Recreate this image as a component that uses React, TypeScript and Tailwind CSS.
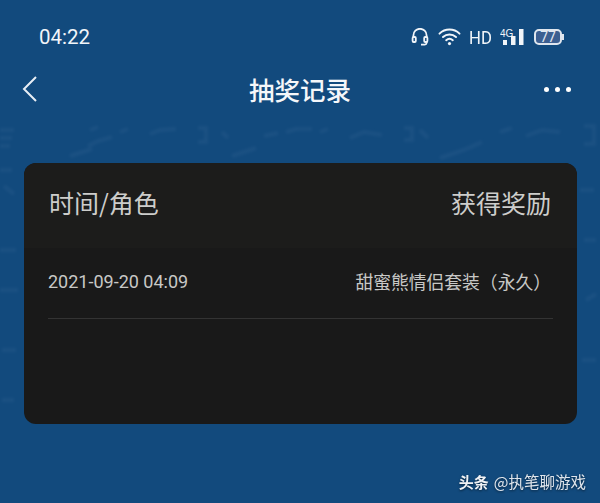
const cjk = "font-['Noto_Sans_CJK_SC','Noto_Sans',sans-serif]";

// faint scribbles in the page background, behind the card
const streaks = [
  "M0 130h14M0 138h12M0 146h10M88 146l10-5 14-4M70 156l22-7M90 130l8-3M120 132l8-3M150 134l10-4 16-1M198 128h8v14h-8M222 132l6 6M232 156l24-8M264 136l14-3M286 132l10-3 16 0",
  "M320 132l8-3M350 138l14-6 18 3M404 128h8v12h-8M420 130l8 8M440 158l24-8 18-8M500 132l12-4M526 136l16-6 18 2M584 126h10v18h-10",
  "M0 170h12M4 186l10 8M0 250h16M0 290h18M580 190h14M584 240h12M586 300l10-6M582 360h14M2 350h14M2 400h12",
];

function HeadsetIcon() {
  return (
    <svg width="18" height="18" viewBox="0 0 18 18" fill="none" stroke="#f1f5f9" strokeWidth="1.8">
      <path d="M2.4 10V7.4a6.6 6.6 0 0 1 13.2 0V10" />
      <rect x="1.6" y="9" width="3.2" height="5" rx="1" />
      <rect x="13.2" y="9" width="3.2" height="5" rx="1" />
      <path d="M15.6 14v1a1.8 1.8 0 0 1-1.8 1.6H10" />
    </svg>
  );
}

function WifiIcon() {
  return (
    <svg width="23" height="18" viewBox="0 0 23 18" fill="none" stroke="#f1f5f9" strokeWidth="2" strokeLinecap="round">
      <path d="M1.5 5.6a14.5 14.5 0 0 1 20 0" />
      <path d="M5 9a9.6 9.6 0 0 1 13 0" />
      <path d="M8.2 12.2a5 5 0 0 1 6.6 0" />
      <circle cx="11.5" cy="15.6" r="1.6" fill="#f1f5f9" stroke="none" />
    </svg>
  );
}

function SignalIcon() {
  return (
    <svg width="25" height="18" viewBox="0 0 25 18" fill="#f1f5f9">
      <rect x="3" y="12" width="4" height="5" />
      <rect x="11" y="8" width="4.5" height="9" />
      <rect x="19" y="1" width="4.5" height="16" />
      <text x="0" y="8.5" fontSize="10" fontFamily="Liberation Sans, sans-serif">4G</text>
    </svg>
  );
}

function Battery() {
  return (
    <div className="flex items-center">
      <div className="w-[28px] h-[16px] rounded-[5px] border-2 border-[#dfe6ee] bg-[#3c5f91] flex items-center justify-center text-[14px] leading-none text-[#e2e8f0] font-['Roboto',sans-serif]">
        77
      </div>
      <div className="w-[2px] h-[6px] bg-[#dfe6ee]" />
    </div>
  );
}

export default function App() {
  return (
    <div className="relative w-[600px] h-[503px] overflow-hidden bg-[#124a7d] flex flex-col">
      <svg className="absolute inset-0 blur-[1.5px]" width="600" height="503" fill="none" stroke="#2a5c8c" strokeWidth="4" opacity="0.4">
        {streaks.map((d) => (
          <path key={d} d={d} />
        ))}
      </svg>

      {/* status bar */}
      <div className="relative h-[74px] shrink-0 flex items-center justify-between pl-[39px] pr-[36px]">
        <span className="text-[20.5px] text-[#f1f5f9] font-['Roboto',sans-serif]">04:22</span>
        <div className="flex items-center gap-[9px]">
          <HeadsetIcon />
          <WifiIcon />
          <span className="w-[21px] flex justify-center text-[19px] leading-none text-[#f1f5f9] font-['Roboto',sans-serif] scale-x-[0.88]">HD</span>
          <SignalIcon />
          <Battery />
        </div>
      </div>

      {/* nav bar */}
      <div className="relative h-[30px] shrink-0 flex items-center justify-between pl-[22px] pr-[29px]">
        <svg width="16" height="28" viewBox="0 0 16 28" fill="none" stroke="#e8eef5" strokeWidth="2">
          <path d="M14 2 2 14l12 12" />
        </svg>
        <h1 className={`${cjk} absolute left-0 right-0 text-center text-[25.5px] font-medium leading-none text-[#f5f7fa]`}>
          抽奖记录
        </h1>
        <div className="flex items-center gap-[6px]">
          <span className="size-[5px] rounded-full bg-white" />
          <span className="size-[5px] rounded-full bg-white" />
          <span className="size-[5px] rounded-full bg-white" />
        </div>
      </div>

      {/* record card */}
      <div className="relative mt-[59px] ml-[24px] w-[553px] h-[261px] rounded-[12px] bg-[#191919] flex flex-col">
        <div className="h-[85px] shrink-0 rounded-t-[12px] bg-[#1c1c1b] flex items-center justify-between pl-[25px] pr-[26px] pb-[6px]">
          <span className={`${cjk} text-[25px] leading-none text-[#cdcdcb]`}>时间/角色</span>
          <span className={`${cjk} text-[25px] leading-none text-[#cdcdcb]`}>获得奖励</span>
        </div>
        <div className="mx-[24px] h-[71px] flex items-center justify-between border-b border-[#333333] pb-[2px]">
          <span className="text-[18px] leading-none text-[#c8c8c6] font-['Roboto',sans-serif]">2021-09-20 04:09</span>
          <span className={`${cjk} text-[17.8px] leading-none text-[#c8c8c6] pr-[2px]`}>甜蜜熊情侣套装（永久）</span>
        </div>
      </div>

      {/* watermark */}
      <div className="absolute right-[14px] bottom-[14px] flex items-center gap-[5px] text-[#f0f2f5] drop-shadow-[0_1px_1px_rgba(0,0,0,0.5)]">
        <span className={`${cjk} text-[15px] font-bold leading-none`}>头条</span>
        <span className={`${cjk} text-[15.5px] leading-none text-[#dfe5ec]`}>@执笔聊游戏</span>
      </div>
    </div>
  );
}
